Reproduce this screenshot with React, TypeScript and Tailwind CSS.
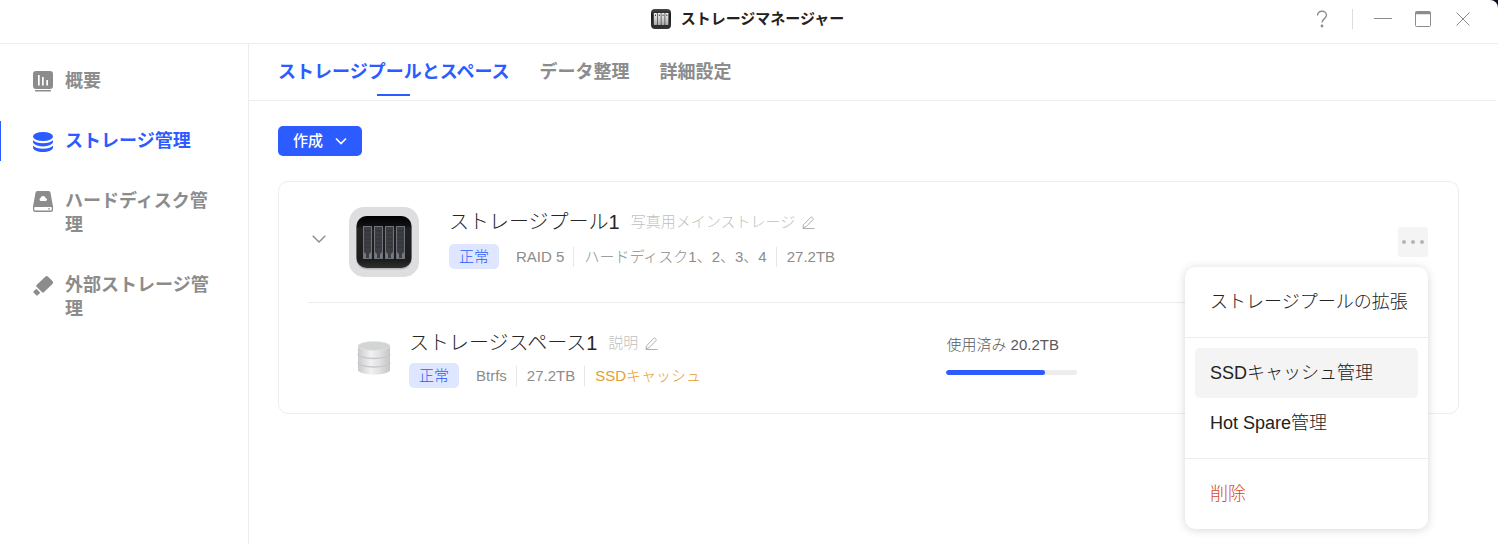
import { useState } from "react";
import type { ReactNode } from "react";
import clsx from "clsx";

function AppIcon({ className }: { className?: string }) {
  return (
    <svg viewBox="0 0 20 20" className={className} aria-hidden="true">
      <defs>
        <linearGradient id="app-bg" x1="0" y1="0" x2="0" y2="1">
          <stop offset="0" stopColor="#4a4a4a" />
          <stop offset="0.3" stopColor="#1c1c1c" />
          <stop offset="1" stopColor="#333333" />
        </linearGradient>
        <linearGradient id="app-bay" x1="0" y1="0" x2="0" y2="1">
          <stop offset="0" stopColor="#f2f2f2" />
          <stop offset="1" stopColor="#a8a8a8" />
        </linearGradient>
      </defs>
      <rect width="20" height="20" rx="4" fill="url(#app-bg)" />
      {[2.8, 6.6, 10.4, 14.2].map((x) => (
        <g key={x}>
          <rect x={x} y="4" width="3.200" height="12" rx="0.400" fill="url(#app-bay)" />
          <rect x={x + 1.2} y="5.500" width="0.900" height="1.500" fill="#333333" />
        </g>
      ))}
    </svg>
  );
}

function PoolIcon() {
  return (
    <svg viewBox="0 0 70 70" className="size-[70px] shrink-0" aria-hidden="true">
      <defs>
        <linearGradient id="pool-bg" x1="0" y1="0" x2="0" y2="1">
          <stop offset="0" stopColor="#000000" />
          <stop offset="0.18" stopColor="#101010" />
          <stop offset="0.25" stopColor="#222222" />
          <stop offset="0.85" stopColor="#1c1c1c" />
          <stop offset="1" stopColor="#303030" />
        </linearGradient>
      </defs>
      <rect width="70" height="70" rx="15" fill="#dedee0" />
      <rect x="7" y="9.5" width="56" height="53" rx="11" fill="#b9b9bb" />
      <rect x="7.5" y="9" width="55" height="52" rx="10" fill="url(#pool-bg)" />
      {[14, 25, 36, 47].map((x) => (
        <g key={x}>
          <rect x={x + 0.5} y="19.5" width="8" height="32" fill="#3c3e44" stroke="#6e727b" />
          <path d={`M${x + 2} 24h5M${x + 2} 28h5M${x + 2} 32h5M${x + 2} 36h5M${x + 2} 40h5`} stroke="#303238" />
          <path d={`M${x + 1} 45l2 2v4h-2zM${x + 8} 45l-2 2v4h2z`} fill="#747983" />
        </g>
      ))}
    </svg>
  );
}

function SpaceIcon() {
  return (
    <svg viewBox="0 0 34 34" className="size-[34px] shrink-0" aria-hidden="true">
      <defs>
        <linearGradient id="space-side" x1="0" y1="0" x2="1" y2="0">
          <stop offset="0" stopColor="#c9cacc" />
          <stop offset="0.4" stopColor="#f1f1f2" />
          <stop offset="0.65" stopColor="#e2e2e4" />
          <stop offset="1" stopColor="#c4c5c7" />
        </linearGradient>
      </defs>
      <path d="M1 5v24c0 2.5 7 4.500 16 4.500s16-2 16-4.500V5z" fill="url(#space-side)" />
      <path d="M1 13c0 2.500 7 4.500 16 4.500s16-2 16-4.500M1 21.500c0 2.500 7 4.500 16 4.500s16-2 16-4.500" fill="none" stroke="#c6c7c9" strokeWidth="1.300" />
      <ellipse cx="17" cy="5" rx="16" ry="4.500" fill="#d3d5d5" stroke="#e4e5e5" strokeWidth="0.600" />
    </svg>
  );
}

function OverviewIcon() {
  return (
    <svg viewBox="0 0 20 21" className="h-[21px] w-5" fill="currentColor" aria-hidden="true">
      <path fillRule="evenodd" d="M3 0h14a3 3 0 0 1 3 3v12a3 3 0 0 1-3 3H3a3 3 0 0 1-3-3V3a3 3 0 0 1 3-3zM5 4v10.500h1.700V4zm4 2v8.500h1.700V6zm4.300 3v5.500H15V9z" />
      <rect x="2" y="19" width="16" height="1.500" rx="0.500" />
    </svg>
  );
}

function StorageIcon() {
  return (
    <svg viewBox="0 0 20 20" className="size-5" fill="currentColor" aria-hidden="true">
      <ellipse cx="10" cy="4.500" rx="10" ry="4.500" />
      <path d="M0 8.200C2 10.200 5.500 11.200 10 11.200s8-1 10-3v1.600c0 2.600-4.500 4.600-10 4.600S0 12.400 0 9.800z" />
      <path d="M0 13.800C2 15.800 5.500 16.800 10 16.800s8-1 10-3v1.600C20 18 15.500 20 10 20S0 18 0 15.400z" />
    </svg>
  );
}

function DiskIcon() {
  return (
    <svg viewBox="0 0 20 21" className="h-[21px] w-5" fill="currentColor" aria-hidden="true">
      <path fillRule="evenodd" d="M4.500 0h11a2 2 0 0 1 2 1.700L20 15.500v3a2.500 2.500 0 0 1-2.500 2.500h-15A2.500 2.500 0 0 1 0 18.500v-3L2.500 1.700A2 2 0 0 1 4.500 0zM10 5a2.600 2.600 0 0 0-2.500 1.900A1.700 1.700 0 0 0 7.600 10h5.200a1.600 1.600 0 0 0-.2-3.100A2.600 2.600 0 0 0 10 5zM2.200 16a1 1 0 0 0-1 1v1.300a1.300 1.300 0 0 0 1.300 1.300h15a1.300 1.300 0 0 0 1.300-1.300V17a1 1 0 0 0-1-1z" />
      <rect x="15" y="17.300" width="2" height="1.200" rx="0.600" />
    </svg>
  );
}

function UsbIcon() {
  return (
    <svg viewBox="0 0 20 20" className="size-5" fill="currentColor" aria-hidden="true">
      <path d="M12.300.8a2 2 0 0 1 2.800 0l4.300 4.300a2 2 0 0 1 0 2.800l-8.600 8.400a1.200 1.200 0 0 1-1.700 0L3.600 10.800a1.200 1.200 0 0 1 0-1.700z" />
      <path d="M3.300 12.700l4 4-2.600 2.600a1 1 0 0 1-1.400 0L.7 16.700a1 1 0 0 1 0-1.400z" />
    </svg>
  );
}

function PencilIcon() {
  return (
    <svg viewBox="0 0 13 13" className="size-[13px]" fill="none" stroke="currentColor" aria-hidden="true">
      <path d="M1.500 8.800L8.700 1.300a1 1 0 0 1 1.400 0l.9.900a1 1 0 0 1 0 1.400L4 10.800l-3 .8zM0.500 12.500h12" />
    </svg>
  );
}

const navItems = [
  { label: "概要", icon: <OverviewIcon /> },
  { label: "ストレージ管理", icon: <StorageIcon /> },
  { label: "ハードディスク管理", icon: <DiskIcon /> },
  { label: "外部ストレージ管理", icon: <UsbIcon /> },
];

const tabs = ["ストレージプールとスペース", "データ整理", "詳細設定"];

const menuGroups = [["ストレージプールの拡張"], ["SSDキャッシュ管理", "Hot Spare管理"], ["削除"]];

function TitleBar() {
  return (
    <header className="grid h-11 shrink-0 grid-cols-[1fr_auto_1fr] items-center border-b border-[#ededed] pb-[5px]">
      <div />
      <h1 className="flex items-center gap-[10px] pr-[3px] text-[15px] font-bold text-[#222222]">
        <AppIcon className="size-5" />
        ストレージマネージャー
      </h1>
      <div className="flex items-center justify-end gap-5 pr-[25px] text-[#8c8c8c]">
        <button aria-label="ヘルプ" className="flex size-5 items-center justify-center">
          <svg viewBox="0 0 12 18" className="h-[18px] w-3" fill="none" stroke="currentColor" strokeWidth="1.400">
            <path d="M1.500 5.500C1.500 3 3.300 1.300 6 1.300s4.500 1.600 4.500 4c0 3-4.500 3.700-4.500 7.200" />
            <circle cx="6" cy="16" r="0.700" fill="currentColor" />
          </svg>
        </button>
        <span className="h-5 w-px bg-[#dddddd]" />
        <button aria-label="最小化" className="flex size-5 items-center justify-center">
          <svg viewBox="0 0 18 18" className="size-[18px]" stroke="currentColor"><path d="M0 8.500h18" /></svg>
        </button>
        <button aria-label="最大化" className="flex size-5 items-center justify-center">
          <svg viewBox="0 0 16 16" className="size-4" fill="none" stroke="currentColor">
            <rect x="0.500" y="0.500" width="15" height="15" rx="1" />
            <path d="M0.500 2h15" strokeWidth="2.500" />
          </svg>
        </button>
        <button aria-label="閉じる" className="flex size-5 items-center justify-center">
          <svg viewBox="0 0 14 14" className="size-[14px]" stroke="currentColor"><path d="M0.500 0.500l13 13M13.500 0.500l-13 13" /></svg>
        </button>
      </div>
    </header>
  );
}

function Badge() {
  return <span className="mr-2 rounded-[5px] bg-[#dfe6ff] px-[10px] text-[#2c5cff]">正常</span>;
}

function Meta({ items, children }: { items: string[]; children?: ReactNode }) {
  return (
    <div className="flex items-center text-[15px] leading-[25px] text-[#8c8c8c]">
      <Badge />
      {items.map((item, i) => (
        <span key={item} className={clsx("pr-[9px] leading-5", i > 0 ? "border-l border-[#e6e6e6] pl-[10px]" : "pl-[9px]")}>
          {item}
        </span>
      ))}
      {children}
    </div>
  );
}

function Name({ title, note }: { title: string; note: string }) {
  return (
    <div className="flex items-center gap-[11px]">
      <h2 className="text-[20px] leading-[30px] text-[#262626]">{title}</h2>
      <span className="text-[15px] text-[#bfbfbf]">{note}</span>
      <button aria-label={`${note}を編集`} className="-ml-1 text-[#b0b0b0]">
        <PencilIcon />
      </button>
    </div>
  );
}

function PoolMenu() {
  return (
    <div
      role="menu"
      className="absolute top-10 right-0 z-10 w-[243px] divide-y divide-[#ededed] rounded-[10px] bg-white text-[#222222] shadow-[0_1px_10px_rgba(0,0,0,0.16)]"
    >
      {menuGroups.map((group) => (
        <div key={group[0]} className="p-[10px]">
          {group.map((item) => (
            <button
              key={item}
              role="menuitem"
              className={clsx(
                "block h-[50px] w-full rounded-[5px] px-[15px] text-left text-[18px] whitespace-nowrap",
                item === "SSDキャッシュ管理" && "bg-[#f4f4f4]",
                item === "削除" && "text-[#cf4a1f]"
              )}
            >
              {item}
            </button>
          ))}
        </div>
      ))}
    </div>
  );
}

export default function App() {
  const [activeTab, setActiveTab] = useState(tabs[0]);
  const [activeNav, setActiveNav] = useState("ストレージ管理");
  const [menuOpen, setMenuOpen] = useState(true);

  return (
    <div className="bg-[#0b0a1f] font-['Liberation_Sans','Noto_Sans_CJK_JP',sans-serif] font-light">
      <div lang="ja" className="flex min-h-screen flex-col rounded-tr-lg bg-white">
        <TitleBar />
        <div className="flex flex-1">
          <nav className="flex w-[249px] shrink-0 flex-col gap-5 border-r border-[#ededed] pt-[17px]">
            {navItems.map(({ label, icon }) => (
              <button
                key={label}
                onClick={() => setActiveNav(label)}
                className={clsx(
                  "flex gap-3 border-l py-2 pr-9 pl-8 text-left text-[18px] leading-6 font-bold",
                  label === activeNav ? "border-[#2c5cff] text-[#2c5cff]" : "border-transparent text-[#8c8c8c]"
                )}
              >
                <span className="flex h-6 shrink-0 items-center pt-px">{icon}</span>
                {label}
              </button>
            ))}
          </nav>

          <main className="min-w-0 flex-1">
            <div role="tablist" className="mr-0.5 flex h-[57px] gap-[30px] border-b border-[#ededed] pl-[29px]">
              {tabs.map((tab) => (
                <button
                  key={tab}
                  role="tab"
                  aria-selected={tab === activeTab}
                  onClick={() => setActiveTab(tab)}
                  className={clsx(
                    "flex flex-col items-center justify-between pt-[14px] pb-1 text-[18px] leading-7 font-bold",
                    tab === activeTab ? "text-[#2c5cff]" : "text-[#8c8c8c]"
                  )}
                >
                  {tab}
                  {tab === activeTab && <span className="h-0.5 w-[33px] bg-[#2c5cff]" />}
                </button>
              ))}
            </div>

            <div className="pt-[25px] pr-[39px] pb-10 pl-[29px]">
              <button className="flex h-[30px] items-center gap-3 rounded-[5px] bg-[#2c5cff] px-[15px] text-[15px] font-medium text-white">
                作成
                <svg viewBox="0 0 12 8" className="h-2 w-3" fill="none" stroke="currentColor" strokeWidth="1.600">
                  <path d="M1 1.500l5 5 5-5" />
                </svg>
              </button>

              <section className="mt-[25px] rounded-[10px] border border-[#ededed] pr-[30px] pl-[29px]">
                <div className="flex h-[120px] items-start pt-[25px]">
                  <button aria-label="折りたたむ" className="mr-[19px] flex h-16 w-[22px] items-center justify-center text-[#8c8c8c]">
                    <svg viewBox="0 0 14 8" className="h-2 w-[14px]" fill="none" stroke="currentColor" strokeWidth="1.400">
                      <path d="M0.700 0.700L7 7l6.300-6.300" />
                    </svg>
                  </button>
                  <PoolIcon />
                  <div className="ml-[30px] flex flex-1 flex-col gap-[7px]">
                    <Name title="ストレージプール1" note="写真用メインストレージ" />
                    <Meta items={["RAID 5", "ハードディスク1、2、3、4", "27.2TB"]} />
                  </div>
                  <div className="relative mt-5">
                    <button
                      aria-label="その他"
                      aria-expanded={menuOpen}
                      onClick={() => setMenuOpen(!menuOpen)}
                      className="flex size-[30px] items-center justify-center rounded-[3px] bg-[#f4f4f4]"
                    >
                      <svg viewBox="0 0 22 4" className="h-1 w-[22px]" fill="#b5b5b5">
                        <circle cx="2" cy="2" r="2" />
                        <circle cx="11" cy="2" r="2" />
                        <circle cx="20" cy="2" r="2" />
                      </svg>
                    </button>
                    {menuOpen && <PoolMenu />}
                  </div>
                </div>

                <div className="grid h-[111px] grid-cols-[57fr_43fr] items-center border-t border-[#ededed]">
                  <div className="flex items-center pl-[49px]">
                    <SpaceIcon />
                    <div className="ml-[18px] flex flex-col gap-[5px]">
                      <Name title="ストレージスペース1" note="説明" />
                      <Meta items={["Btrfs", "27.2TB"]}>
                        <a href="#ssd-cache" className="border-l border-[#e6e6e6] pl-[10px] leading-5 text-[#e5a02d]">
                          SSDキャッシュ
                        </a>
                      </Meta>
                    </div>
                  </div>
                  <div className="w-[131px] pb-[7px]">
                    <p className="text-[15px] leading-5 whitespace-nowrap text-[#595959]">使用済み 20.2TB</p>
                    <div className="mt-[15px] h-[5px] overflow-hidden rounded-full bg-[#ededed]">
                      <div className="h-full w-3/4 rounded-full bg-[#2c5cff]" />
                    </div>
                  </div>
                </div>
              </section>
            </div>
          </main>
        </div>
      </div>
    </div>
  );
}
